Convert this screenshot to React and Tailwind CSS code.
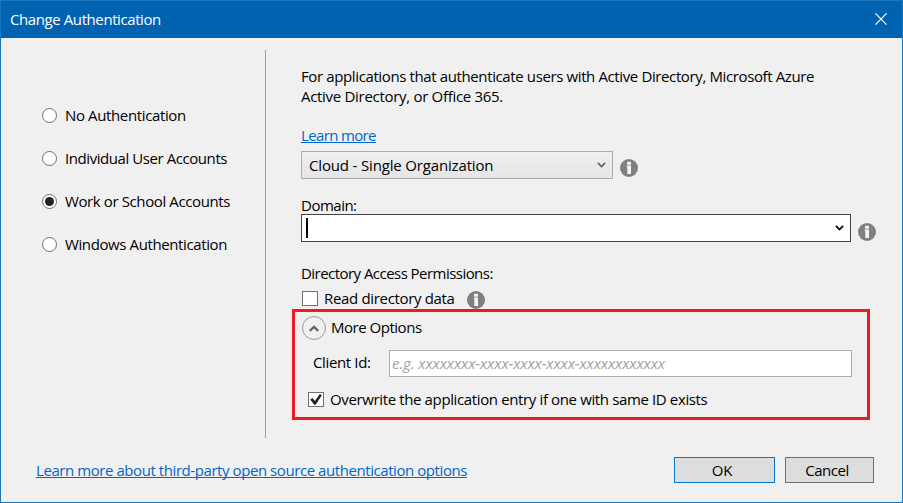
function InfoIcon({ className = "" }) {
  return (
    <svg className={`h-[18px] w-[18px] shrink-0 ${className}`} viewBox="0 0 18 18">
      <circle cx="9" cy="9" r="9" fill="#808080" />
      <rect x="7" y="2.7" width="4" height="3" rx="0.8" fill="#f4f4f4" />
      <path d="M6.8 6.6H11v8.4H7.3V8.1h-0.5z" fill="#f4f4f4" />
    </svg>
  );
}

function ComboArrow({ color }) {
  return (
    <svg className="h-[6px] w-[9px] shrink-0" viewBox="0 0 9 6">
      <path d="M0.9 0.9 4.5 4.5 8.1 0.9" fill="none" stroke={color} strokeWidth="1.7" />
    </svg>
  );
}

function Radio({ label, checked, tracking }) {
  return (
    <label className="flex h-[15px] items-center">
      <span className="flex h-[15px] w-[15px] items-center justify-center rounded-full border border-[#707070] bg-white">
        {checked && <span className="h-[9px] w-[9px] rounded-full bg-[#212121]" />}
      </span>
      <span className={`ml-2 pb-[2px] ${tracking}`}>{label}</span>
    </label>
  );
}

function Checkbox({ checked }) {
  return (
    <span className="flex h-[15px] w-4 shrink-0 items-center justify-center border border-[#707070] bg-white">
      {checked && (
        <svg className="h-[13px] w-[14px]" viewBox="0 0 14 13">
          <path d="M1.2 6.6 3.5 5 5.8 8 10.9 1 12.9 2.2 6.6 11.8 5.2 11.8Z" fill="#212121" />
        </svg>
      )}
    </span>
  );
}

export default function App() {
  return (
    <div className="flex h-[503px] w-[903px] flex-col whitespace-nowrap border border-[#1a75bd] bg-[#f0f0f0] font-['Open_Sans','Noto_Sans',sans-serif] text-[15px] leading-5 text-black">
      <header className="flex h-[37px] shrink-0 items-center justify-between bg-[#0063b1] pl-[9px] pr-[15px] text-white">
        <span className="pb-[2px] tracking-[-0.41px]">Change Authentication</span>
        <svg className="mb-[2px] h-3 w-3" viewBox="0 0 12 12">
          <path d="M0.4 0.4 11.6 11.6M11.6 0.4 0.4 11.6" stroke="#fff" strokeWidth="1.2" />
        </svg>
      </header>

      <div className="flex h-[400px] pt-3">
        <nav className="flex h-[388px] w-[265px] shrink-0 flex-col gap-7 border-r border-[#a0a0a0] pl-[41px] pt-[58px]">
          <Radio label="No Authentication" tracking="tracking-[-0.37px]" />
          <Radio label="Individual User Accounts" tracking="tracking-[-0.43px]" />
          <Radio label="Work or School Accounts" checked tracking="tracking-[-0.39px]" />
          <Radio label="Windows Authentication" tracking="tracking-[-0.39px]" />
        </nav>

        <main className="flex flex-col pl-[26px] pt-4">
          <p className="pl-[9px]">
            <span className="tracking-[-0.38px]">For applications that authenticate users with Active Directory, Microsoft Azure</span>
            <br />
            <span className="tracking-[-0.3px]">Active Directory, or Office 365.</span>
          </p>
          <div className="mt-[19px] flex h-5 pl-[9px]">
            <a className="tracking-[-0.64px] text-[#0066cc] underline decoration-1 underline-offset-1 [text-decoration-skip-ink:none]">Learn more</a>
          </div>

          <div className="mt-[6px] flex h-7 pl-[9px]">
            <div className="flex w-[312px] items-center justify-between border border-[#acacac] bg-linear-to-b from-[#f0f0f0] to-[#e5e5e5] pl-[7px] pr-[6px]">
              <span className="pb-px tracking-[-0.16px]">Cloud - Single Organization</span>
              <ComboArrow color="#606060" />
            </div>
            <InfoIcon className="ml-[7px] mt-2" />
          </div>

          <div className="mt-4 h-[19px] pl-[9px]">
            <span className="tracking-[-0.5px]">Domain:</span>
          </div>
          <div className="flex h-7 pl-[9px]">
            <div className="flex w-[550px] items-center justify-between border border-[#434346] bg-white pl-1 pr-[6px]">
              <span className="h-5 w-[2px] bg-black" />
              <ComboArrow color="#000000" />
            </div>
            <InfoIcon className="ml-[7px] mt-[9px]" />
          </div>

          <div className="mt-[21px] h-5 pl-[9px]">
            <span className="tracking-[-0.54px]">Directory Access Permissions:</span>
          </div>
          <div className="mt-[5px] mb-px flex h-5 items-center pl-[10px]">
            <Checkbox />
            <span className="ml-[6px] tracking-[-0.33px]">Read directory data</span>
            <InfoIcon className="ml-3 mt-[3px]" />
          </div>

          <section className="flex h-[111px] w-[578px] flex-col border-[3px] border-[#ed1c24]">
            <div className="mt-1 flex h-6 items-center pl-[7px]">
              <span className="flex h-6 w-6 items-center justify-center rounded-full border border-[#999999]">
                <svg className="h-[7px] w-[10px]" viewBox="0 0 10 7">
                  <path d="M0.8 5.8 5 1.8 9.2 5.8" fill="none" stroke="#666" strokeWidth="2.3" />
                </svg>
              </span>
              <span className="ml-[5px] pb-[2px] tracking-[-0.48px]">More Options</span>
            </div>
            <div className="mt-[10px] flex h-[27px] items-center pl-[18px]">
              <span className="w-[76px] pb-[4px] tracking-[-0.36px]">Client Id:</span>
              <div className="flex h-[27px] w-[463px] items-center border border-[#abadb3] bg-white pl-[2px] italic text-[#a0a0a0]">
                <span className="pb-[2px] tracking-[-0.07px]">e.g. xxxxxxxx-xxxx-xxxx-xxxx-xxxxxxxxxxxx</span>
              </div>
            </div>
            <div className="mt-3 flex h-5 items-center pl-[13px]">
              <Checkbox checked />
              <span className="ml-[6px] pb-px tracking-[-0.37px]">Overwrite the application entry if one with same ID exists</span>
            </div>
          </section>
        </main>
      </div>

      <footer className="mt-[19px] flex h-[26px] items-center pl-[35px] pr-7">
        <a className="mr-auto pb-px tracking-[-0.43px] text-[#0066cc] underline decoration-1 underline-offset-1 [text-decoration-skip-ink:none]">
          Learn more about third-party open source authentication options
        </a>
        <button className="flex h-[26px] w-[101px] items-center justify-center border border-[#0078d7] bg-[#dddddd] pr-[5px]">
          <span className="tracking-[-0.3px]">OK</span>
        </button>
        <button className="ml-[10px] flex h-[26px] w-[89px] items-center justify-center border border-[#707070] bg-[#dddddd] pr-[5px]">
          <span className="tracking-[-0.5px]">Cancel</span>
        </button>
      </footer>
    </div>
  );
}
